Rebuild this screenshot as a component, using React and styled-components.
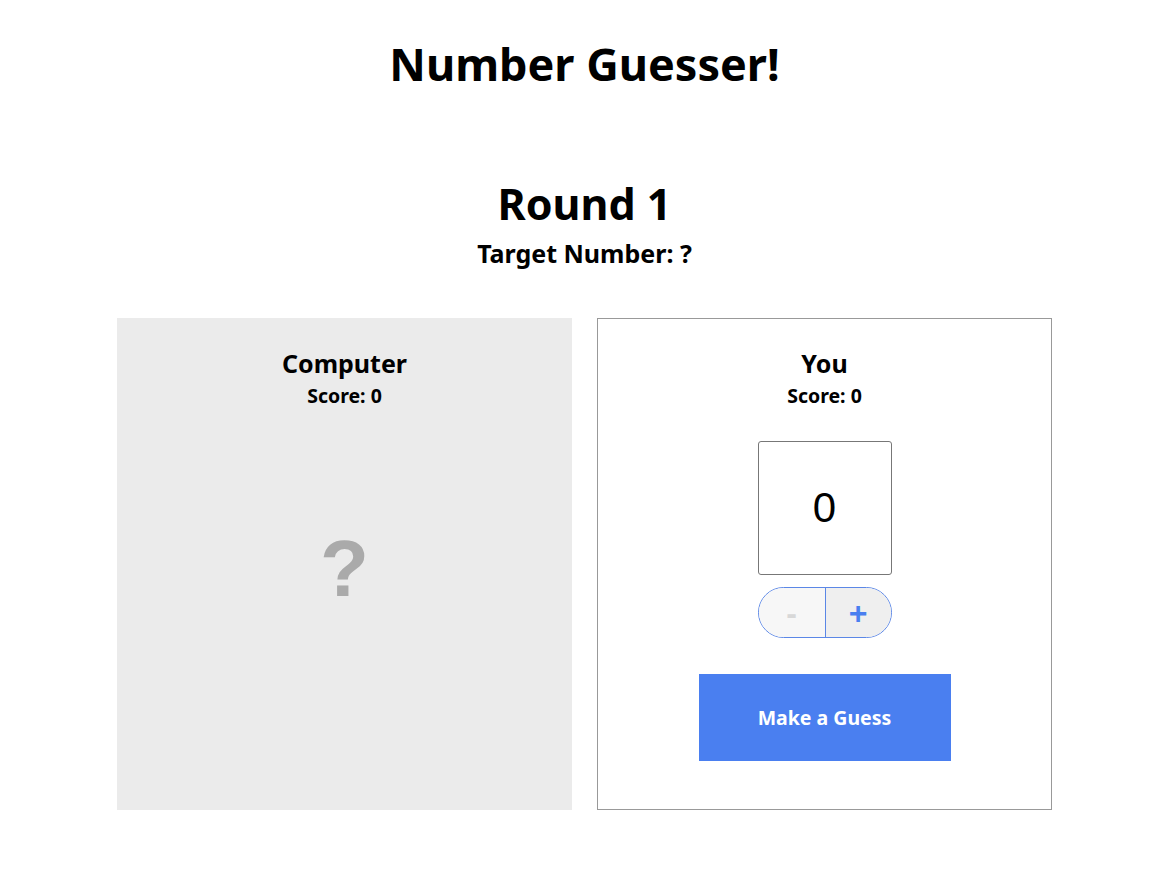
import React, { useState } from "react";
import styled, { createGlobalStyle } from "styled-components";

const GlobalStyle = createGlobalStyle`
  body {
    margin: 0;
    background: #ffffff;
    font-family: "Noto Sans", "Lato", sans-serif;
    color: #000000;
  }
`;

const Page = styled.div`
  display: flex;
  flex-direction: column;
  align-items: center;
  padding: 34px 0 0 16px;
`;

const Title = styled.h1`
  margin: 0;
  font-size: 45px;
  font-weight: 700;
  line-height: 60px;
`;

const RoundInfo = styled.div`
  margin-top: 84px;
  display: flex;
  flex-direction: column;
  align-items: center;
`;

const RoundTitle = styled.h2`
  margin: 0;
  font-size: 43px;
  font-weight: 700;
  line-height: 52px;
`;

const Target = styled.div`
  margin-top: 7px;
  font-size: 25px;
  font-weight: 700;
  line-height: 32px;
`;

const Board = styled.div`
  margin-top: 49px;
  display: grid;
  grid-template-columns: 455px 455px;
  gap: 25px;
`;

const Panel = styled.div`
  box-sizing: border-box;
  height: 492px;
  display: flex;
  flex-direction: column;
  align-items: center;
  padding-top: 28px;
  background: ${(p) => (p.shaded ? "#ebebeb" : "#ffffff")};
  border: 1px solid ${(p) => (p.shaded ? "#ebebeb" : "#999999")};
`;

const PlayerName = styled.div`
  font-size: 25px;
  font-weight: 700;
  line-height: 32px;
`;

const Score = styled.div`
  margin-top: 4px;
  font-size: 19.5px;
  font-weight: 700;
  line-height: 26px;
`;

const Mystery = styled.div`
  flex: 1;
  display: flex;
  align-items: center;
  justify-content: center;
  font-family: "Liberation Sans", Arial, sans-serif;
  font-size: 80px;
  font-weight: 700;
  color: #aaaaaa;
  padding-bottom: 80px;
`;

const GuessBox = styled.div`
  margin-top: 32px;
  box-sizing: border-box;
  width: 134px;
  height: 134px;
  border: 1px solid #777777;
  border-radius: 3px;
  display: flex;
  align-items: center;
  justify-content: center;
  font-family: "Liberation Sans", Arial, sans-serif;
  font-size: 42px;
`;

const Stepper = styled.div`
  margin-top: 12px;
  box-sizing: border-box;
  width: 134px;
  height: 51px;
  border: 1px solid #5b87e6;
  border-radius: 26px;
  overflow: hidden;
  display: grid;
  grid-template-columns: 1fr 1fr;
`;

const StepButton = styled.button`
  border: none;
  border-left: ${(p) => (p.right ? "1px solid #5b87e6" : "none")};
  margin: 0;
  padding: 0;
  background: ${(p) => (p.disabled ? "#f7f7f7" : "#efefef")};
  color: ${(p) => (p.disabled ? "#d8d8d8" : "#4a7ff0")};
  font-family: "Liberation Sans", Arial, sans-serif;
  font-size: 32px;
  font-weight: 700;
  line-height: 1;
  cursor: pointer;
`;

const GuessButton = styled.button`
  margin-top: 36px;
  width: 252px;
  height: 87px;
  border: none;
  background: #4a7ff0;
  color: #ffffff;
  font-family: inherit;
  font-size: 19.5px;
  font-weight: 700;
  cursor: pointer;
`;

export default function App() {
  const [guess, setGuess] = useState(0);
  return (
    <>
      <GlobalStyle />
      <Page>
        <Title>Number Guesser!</Title>
        <RoundInfo>
          <RoundTitle>Round 1</RoundTitle>
          <Target>Target Number: ?</Target>
        </RoundInfo>
        <Board>
          <Panel shaded>
            <PlayerName>Computer</PlayerName>
            <Score>Score: 0</Score>
            <Mystery>?</Mystery>
          </Panel>
          <Panel>
            <PlayerName>You</PlayerName>
            <Score>Score: 0</Score>
            <GuessBox>{guess}</GuessBox>
            <Stepper>
              <StepButton
                disabled={guess <= 0}
                onClick={() => setGuess((g) => Math.max(0, g - 1))}
              >
                -
              </StepButton>
              <StepButton right onClick={() => setGuess((g) => Math.min(10, g + 1))}>
                +
              </StepButton>
            </Stepper>
            <GuessButton>Make a Guess</GuessButton>
          </Panel>
        </Board>
      </Page>
    </>
  );
}
